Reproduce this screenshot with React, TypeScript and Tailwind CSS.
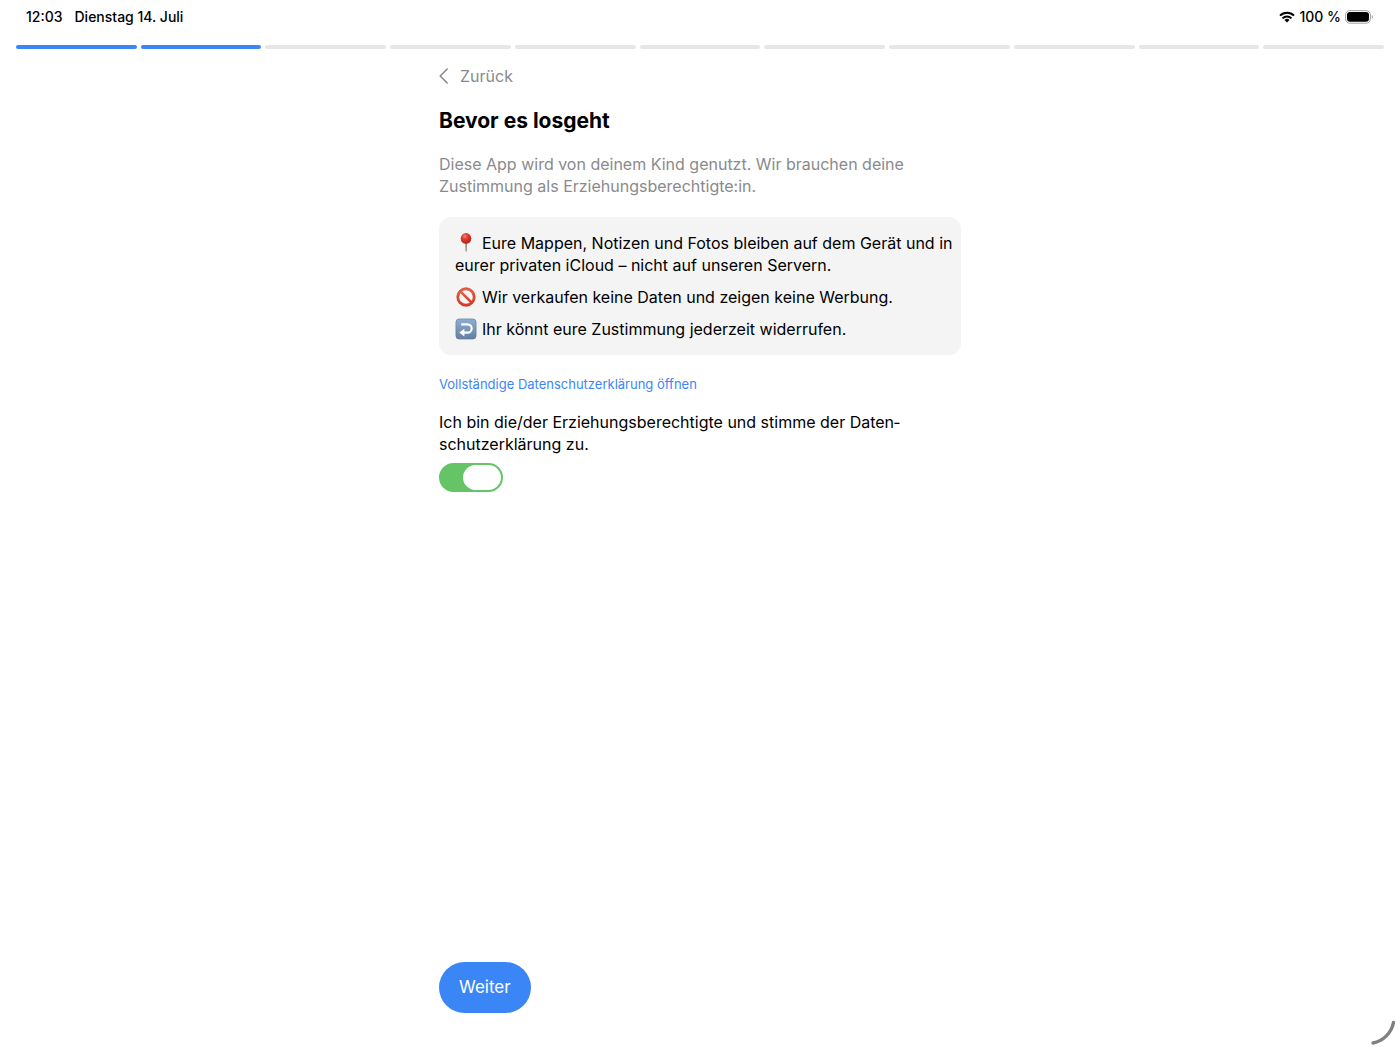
import { useState } from "react"
import type { ReactNode } from "react"

const TOTAL_STEPS = 11

const WifiIcon = () => (
  <svg viewBox="0 0 16 12" className="h-3 w-4" aria-hidden="true">
    <g fill="none" stroke="currentColor" strokeWidth="2">
      <path d="M1 4.6 A10 10 0 0 1 15 4.6" />
      <path d="M3.5 7.4 A6.4 6.4 0 0 1 12.5 7.4" />
    </g>
    <path d="M8 11.4 L5.5 8.9 A3.6 3.6 0 0 1 10.5 8.9 Z" fill="currentColor" />
  </svg>
)

const BatteryIcon = () => (
  <svg viewBox="0 0 29 14" className="h-[14px] w-[29px]" aria-hidden="true">
    <rect x="0.6" y="0.6" width="24.8" height="12.6" rx="4.2" fill="none" stroke="#a3a3a3" strokeWidth="1" />
    <rect x="2" y="2" width="22" height="9.8" rx="3" fill="#000" />
    <path d="M26.8 4.9 C28.4 5.5 28.4 8.3 26.8 8.9 Z" fill="#a3a3a3" />
  </svg>
)

const PinIcon = () => (
  <svg viewBox="0 0 22 22" className="h-[22px] w-[22px]" aria-hidden="true">
    <defs>
      <radialGradient id="pinHead" cx="0.4" cy="0.3" r="0.7">
        <stop offset="0" stopColor="#f58a7c" />
        <stop offset="0.4" stopColor="#df3a30" />
        <stop offset="1" stopColor="#b3201c" />
      </radialGradient>
      <linearGradient id="pinNeedle" x1="0" x2="1" y1="0" y2="0">
        <stop offset="0" stopColor="#c9c4c1" />
        <stop offset="1" stopColor="#85766f" />
      </linearGradient>
    </defs>
    <path d="M9.9 9 H12.1 L11.8 19 Q11 20.4 10.2 19 Z" fill="url(#pinNeedle)" />
    <circle cx="11" cy="6.4" r="5.3" fill="url(#pinHead)" />
  </svg>
)

const ForbiddenIcon = () => (
  <svg viewBox="0 0 22 22" className="h-[22px] w-[22px]" aria-hidden="true">
    <defs>
      <linearGradient id="forbidden" x1="0" x2="0" y1="0" y2="1">
        <stop offset="0" stopColor="#e5604a" />
        <stop offset="1" stopColor="#d63a25" />
      </linearGradient>
    </defs>
    <g fill="none" stroke="url(#forbidden)" strokeWidth="2.6">
      <circle cx="11" cy="11" r="8.1" />
      <path d="M5.3 5.3 L16.7 16.7" />
    </g>
    <circle cx="11" cy="11" r="9.3" fill="none" stroke="#b8301f" strokeWidth="0.4" />
  </svg>
)

const ReturnIcon = () => (
  <svg viewBox="0 0 22 22" className="h-[22px] w-[22px]" aria-hidden="true">
    <defs>
      <linearGradient id="returnTile" x1="0" x2="0" y1="0" y2="1">
        <stop offset="0" stopColor="#8caed2" />
        <stop offset="1" stopColor="#64809f" />
      </linearGradient>
    </defs>
    <rect x="0.9" y="0.9" width="20.2" height="20.2" rx="3.4" fill="url(#returnTile)" stroke="#5d7896" strokeWidth="0.6" />
    <path d="M6.2 6.4 H12.6 A4.1 4.1 0 0 1 12.6 14.6 H8.6" fill="none" stroke="#fff" strokeWidth="2.1" />
    <path d="M4.3 14.6 L9.4 10.7 V18.5 Z" fill="#fff" />
  </svg>
)

const PrivacyPoint = ({ icon, children }: { icon: ReactNode; children: ReactNode }) => (
  <li>
    <span className="mr-[5px] inline-block align-bottom">{icon}</span>
    {children}
  </li>
)

const StatusBar = () => (
  <header className="flex h-[33px] items-center justify-between px-[26px] text-sm font-medium">
    <div className="flex gap-3">
      <span>12:03</span>
      <span>Dienstag 14. Juli</span>
    </div>
    <div className="flex items-center gap-1">
      <WifiIcon />
      <span>100 %</span>
      <BatteryIcon />
    </div>
  </header>
)

const ProgressSteps = ({ current }: { current: number }) => (
  <div className="flex gap-1 px-4 pt-3">
    {Array.from({ length: TOTAL_STEPS }, (_, index) => (
      <div
        key={index}
        className={`h-1 flex-1 rounded-full ${index < current ? "bg-[#3b86f7]" : "bg-[#e7e7e7]"}`}
      />
    ))}
  </div>
)

export default function App() {
  const [agreed, setAgreed] = useState(true)

  return (
    <div
      lang="de"
      className="relative flex min-h-screen flex-col bg-white font-['Inter','Liberation_Sans',sans-serif] text-black"
    >
      <StatusBar />
      <ProgressSteps current={2} />

      <main className="mx-auto flex w-full max-w-[522px] flex-1 flex-col items-start pt-4 pb-[37px]">
        <button type="button" className="flex items-center gap-3 text-base leading-[22px] text-[#8a8a8d]">
          <svg viewBox="0 0 9 16" className="h-4 w-[9px]" aria-hidden="true">
            <path
              d="M8.2 1 L1.2 8 L8.2 15"
              fill="none"
              stroke="currentColor"
              strokeWidth="1.6"
              strokeLinecap="round"
              strokeLinejoin="round"
            />
          </svg>
          Zurück
        </button>

        <h1 className="mt-5 text-[21px] leading-7 font-bold">Bevor es losgeht</h1>
        <p className="mt-[18px] max-w-[500px] text-base leading-[22px] text-[#8a8a8d]">
          Diese App wird von deinem Kind genutzt. Wir brauchen deine Zustimmung als Erziehungsberechtigte:in.
        </p>

        {/* Privacy summary */}
        <ul className="mt-5 flex w-full flex-col gap-[10px] rounded-xl bg-[#f4f4f4] py-[15px] pr-1 pl-4 text-base leading-[22px]">
          <PrivacyPoint icon={<PinIcon />}>
            Eure Mappen, Notizen und Fotos bleiben auf dem Gerät und in eurer privaten iCloud – nicht auf unseren
            Servern.
          </PrivacyPoint>
          <PrivacyPoint icon={<ForbiddenIcon />}>Wir verkaufen keine Daten und zeigen keine Werbung.</PrivacyPoint>
          <PrivacyPoint icon={<ReturnIcon />}>Ihr könnt eure Zustimmung jederzeit widerrufen.</PrivacyPoint>
        </ul>

        <a href="#datenschutz" className="mt-5 text-[13px] leading-[18px] text-[#3b86f7]">
          Vollständige Datenschutzerklärung öffnen
        </a>

        {/* Consent */}
        <label htmlFor="consent" className="mt-[18px] max-w-[470px] text-base leading-[22px]">
          Ich bin die/der Erziehungsberechtigte und stimme der Daten&shy;schutzerklärung zu.
        </label>
        <input
          id="consent"
          type="checkbox"
          role="switch"
          checked={agreed}
          onChange={(e) => setAgreed(e.target.checked)}
          className="mt-2 h-[29px] w-16 cursor-pointer appearance-none rounded-full bg-[#d9d9dc] p-[2px] transition-colors before:block before:h-[25px] before:w-[38px] before:rounded-full before:bg-white before:transition-transform before:content-[''] checked:bg-[#65c466] checked:before:translate-x-[22px]"
        />

        <button
          type="button"
          disabled={!agreed}
          className="mt-auto rounded-[26px] bg-[#3b86f7] px-5 py-[14px] text-[17px] leading-[23px] text-white disabled:opacity-40"
        >
          Weiter
        </button>
      </main>

      <svg viewBox="0 0 28 28" className="absolute right-1 bottom-1 h-7 w-7" aria-hidden="true">
        <path d="M5 25 A26 26 0 0 0 25.5 4.5" fill="none" stroke="#808080" strokeWidth="3.4" strokeLinecap="round" />
      </svg>
    </div>
  )
}
